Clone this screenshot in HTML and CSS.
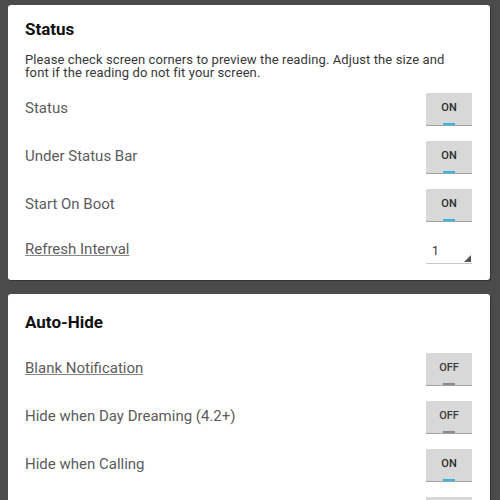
FILE: index.html
```html
<!DOCTYPE html>
<html>
<head>
<meta charset="utf-8">
<link rel="stylesheet" href="styles.css">
</head>
<body>
<div class="card card-status">
  <div class="title">Status</div>
  <div class="desc">Please check screen corners to preview the reading. Adjust the size and font if the reading do not fit your screen.</div>
  <div class="row"><span class="label">Status</span><span class="toggle on">ON</span></div>
  <div class="row"><span class="label">Under Status Bar</span><span class="toggle on">ON</span></div>
  <div class="row"><span class="label">Start On Boot</span><span class="toggle on">ON</span></div>
  <div class="row row-short"><span class="label link">Refresh Interval</span><span class="spinner">1</span></div>
</div>
<div class="card card-hide">
  <div class="title">Auto-Hide</div>
  <div class="row"><span class="label link">Blank Notification</span><span class="toggle off">OFF</span></div>
  <div class="row"><span class="label">Hide when Day Dreaming (4.2+)</span><span class="toggle off">OFF</span></div>
  <div class="row"><span class="label">Hide when Calling</span><span class="toggle on">ON</span></div>
  <div class="row"><span class="label"></span><span class="toggle on"></span></div>
</div>
</body>
</html>
```
FILE: styles.css
```css
html, body {
  margin: 0;
  padding: 0;
  background: #4b4b4b;
  height: 500px;
  overflow: hidden;
  font-family: Roboto, "Noto Sans", sans-serif;
}
body {
  padding-top: 5px;
}
.card {
  margin-left: 8px;
  width: 482px;
  background: #fff;
  border-radius: 3px;
  box-sizing: border-box;
  padding: 0 18px 0 17px;
  box-shadow: 1px 1px 1px rgba(0,0,0,0.35);
}
.card-status {
  padding-top: 14px;
  padding-bottom: 10px;
}
.card-hide {
  margin-top: 14px;
  padding-top: 18px;
}
.title {
  font-size: 17px;
  font-weight: bold;
  color: #111;
  line-height: 20px;
}
.card-hide .title {
  margin-bottom: 13px;
}
.desc {
  margin-top: 14px;
  font-size: 13px;
  line-height: 13px;
  letter-spacing: 0.1px;
  color: #383838;
  margin-bottom: 6px;
  padding-right: 22px;
}
.row {
  height: 48px;
  display: flex;
  align-items: center;
  justify-content: space-between;
}
.row-short {
  height: 41px;
}
.label {
  font-size: 15px;
  color: #5c5c5c;
  margin-top: -2px;
}
.label.link {
  text-decoration: underline;
  text-decoration-color: #888;
}
.toggle {
  width: 46px;
  height: 33px;
  box-sizing: border-box;
  background: #d8d8d8;
  border-bottom: 1px solid #a3a3a3;
  position: relative;
  display: flex;
  align-items: center;
  justify-content: center;
  font-size: 11px;
  font-weight: 500;
  color: #2a2a2a;
  padding-bottom: 2px;
}
.toggle::after {
  content: "";
  position: absolute;
  left: 17px;
  bottom: 0;
  width: 12px;
  height: 2px;
  background: #33b5e5;
}
.toggle.off {
  color: #3a3a3a;
}
.toggle.off::after {
  background: #8a8a8a;
}
.spinner {
  width: 46px;
  height: 22px;
  box-sizing: border-box;
  border-bottom: 1px solid #c8c8c8;
  position: relative;
  font-size: 12px;
  color: #333;
  padding-left: 6px;
  line-height: 18px;
  margin-top: 6px;
}
.spinner::after {
  content: "";
  position: absolute;
  right: 1px;
  bottom: 1px;
  width: 0;
  height: 0;
  border-left: 7px solid transparent;
  border-bottom: 7px solid #555;
}
```
